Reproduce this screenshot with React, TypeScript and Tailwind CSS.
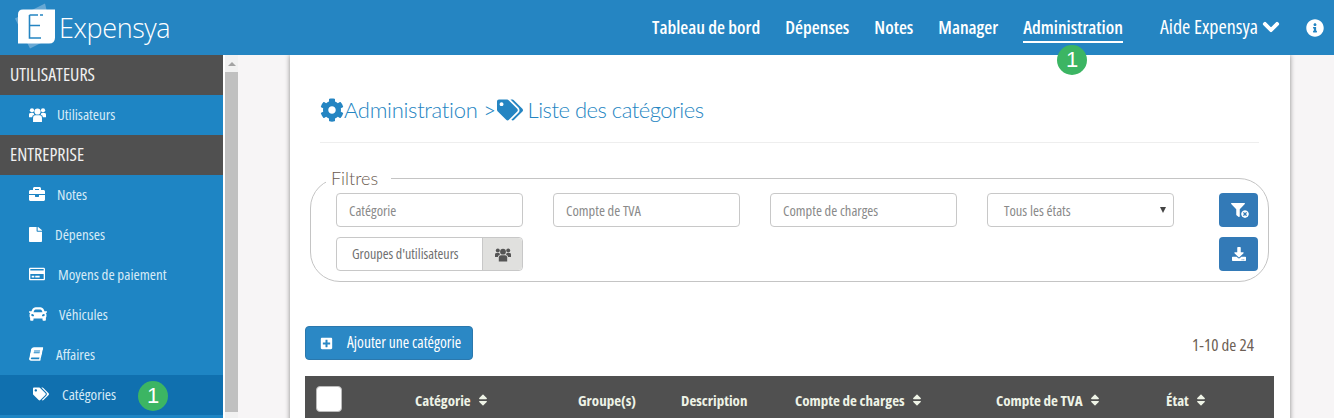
import React from 'react';
import {
  FaBriefcase, FaFile, FaRegCreditCard, FaCar, FaBook, FaTags, FaCog,
  FaChevronDown, FaInfoCircle, FaFilter, FaDownload, FaPlusSquare, FaSort, FaTimesCircle,
} from 'react-icons/fa';

const narrow = "font-['Open_Sans',sans-serif] [font-stretch:75%] whitespace-nowrap";

const navLinks = ['Tableau de bord', 'Dépenses', 'Notes', 'Manager'];

const filterInputs = ['Catégorie', 'Compte de TVA', 'Compte de charges'];

// three people glyph, the package one is too flat compared to the screenshot
function UsersIcon({ className }: { className?: string }) {
  return (
    <svg viewBox="0 0 16 14" fill="currentColor" className={className}>
      <circle cx="8" cy="4.2" r="2.9" />
      <circle cx="2.8" cy="3" r="2" />
      <circle cx="13.2" cy="3" r="2" />
      <path d="M3.8 14 V10 Q3.8 7.8 6 7.8 H10 Q12.2 7.8 12.2 10 V14 Z" />
      <path d="M0 9.6 V7 Q0 5.6 1.5 5.6 H4.4 Q4.5 6.6 5 7.2 Q3 7.6 2.9 9.6 Z" />
      <path d="M16 9.6 V7 Q16 5.6 14.5 5.6 H11.6 Q11.5 6.6 11 7.2 Q13 7.6 13.1 9.6 Z" />
    </svg>
  );
}

function Logo() {
  return (
    <div className="flex items-center">
      <svg width="42" height="42" viewBox="0 0 42 42" className="shrink-0 overflow-visible">
        <polygon points="30,-3.5 0,11.5 15,41.5 38,30" fill="#68a8d4" />
        <path d="M8 2.5 Q3 2.5 3 7.5 V36.5 H34 Q40 36.5 40 30.5 V2.5 Z" fill="#ffffff" />
        <path d="M14.5 8 V31 H26 M14.5 18.5 H25 M14.5 8 H23 M25 8 H28" fill="none" stroke="#2585c2" strokeWidth="1.6" />
      </svg>
      <span className="ml-[2px] font-['Open_Sans',sans-serif] font-light text-[27px] leading-none tracking-[-0.4px] text-white">
        Expensya
      </span>
    </div>
  );
}

function Badge() {
  return (
    <span className="flex h-[30px] w-[30px] items-center justify-center rounded-full bg-[#3cb563] font-['Liberation_Sans',sans-serif] text-[22px] font-normal leading-none text-white [font-stretch:100%]">
      1
    </span>
  );
}

function Header() {
  return (
    <header className="flex h-[55px] items-center bg-[#2585c2] pl-[15px] text-white">
      <Logo />
      <nav className={`ml-auto flex h-full items-center ${narrow} text-[18.3px] font-semibold`}>
        <div className="flex gap-[25px] pb-[2px]">
          {navLinks.map((link) => (
            <a key={link}>{link}</a>
          ))}
        </div>
        <div className="relative ml-[25px] flex h-full items-center pb-[2px]">
          <a>Administration</a>
          <span className="absolute left-0 right-0 top-[41px] h-[2px] bg-white" />
          <span className="absolute left-[34px] top-[45px] z-10"><Badge /></span>
        </div>
        <a className="ml-[37px] flex items-center pb-[2px] text-[20px] font-medium">
          Aide Expensya
          <FaChevronDown className="ml-[4px] h-[18px] w-[18px]" stroke="currentColor" strokeWidth={30} />
        </a>
        <FaInfoCircle className="ml-[26px] mr-[10px] h-[18px] w-[18px]" />
      </nav>
    </header>
  );
}

function SectionTitle({ label }: { label: string }) {
  return (
    <div className={`flex h-[40px] items-center bg-[#505050] pb-[2px] pl-[10px] ${narrow} text-[18px] text-[#f0f0f0]`}>
      {label}
    </div>
  );
}

function Sidebar() {
  return (
    <aside className="flex w-[238px] shrink-0 bg-white">
      <div className={`w-[223px] shrink-0 bg-[#1e85c4] ${narrow} text-[15px] leading-[20px] text-[#d6ebf7]`}>
        <SectionTitle label="UTILISATEURS" />
        <div className="flex h-[40px] items-center pb-[2px] pl-[29px]">
          <UsersIcon className="h-[15px] w-[17px] text-white" />
          <span className="ml-[11px]">Utilisateurs</span>
        </div>
        <SectionTitle label="ENTREPRISE" />
        <div className="flex h-[40px] items-center pb-[2px] pl-[29px]">
          <FaBriefcase className="h-[16px] w-[16px] text-white" />
          <span className="ml-[12px]">Notes</span>
        </div>
        <div className="flex h-[40px] items-center pb-[2px] pl-[29px]">
          <FaFile className="h-[15px] w-[13px] text-white" preserveAspectRatio="none" />
          <span className="ml-[13px]">Dépenses</span>
        </div>
        <div className="flex h-[40px] items-center pb-[2px] pl-[29px]">
          <FaRegCreditCard className="h-[16px] w-[16px] text-white" />
          <span className="ml-[13px]">Moyens de paiement</span>
        </div>
        <div className="flex h-[40px] items-center pb-[2px] pl-[29px]">
          <FaCar className="h-[18px] w-[18px] text-white" />
          <span className="ml-[12px]">Véhicules</span>
        </div>
        <div className="flex h-[40px] items-center pb-[2px] pl-[30px]">
          <FaBook className="h-[14px] w-[12px] -skew-x-12 text-white" />
          <span className="ml-[14px]">Affaires</span>
        </div>
        <div className="flex h-[40px] items-center bg-[#1070af] pb-[2px] pl-[33px]">
          <FaTags className="h-[16px] w-[16px] text-white" />
          <span className="ml-[13px]">Catégories</span>
          <span className="ml-[22px] mt-[4px]"><Badge /></span>
        </div>
        <div className="h-[40px]" />
      </div>
      <div className="ml-[2px] w-[13px] shrink-0 bg-[#f1f1f1]">
        <div className="flex h-[17px] items-center justify-center">
          <span className="h-0 w-0 border-x-[4px] border-b-[4px] border-x-transparent border-b-[#a3a3a3]" />
        </div>
        <div className="h-[340px] bg-[#c0c0c0]" />
      </div>
    </aside>
  );
}

function FilterInput({ label }: { label: string }) {
  return (
    <div className="flex h-[34px] w-[187px] items-center rounded-[4px] border border-[#c8c8c8] pl-[12px] pt-[2px] text-[14.5px] text-[#8a8a8a]">
      {label}
    </div>
  );
}

function Filters() {
  return (
    <fieldset className="mx-[5px] rounded-[30px] border border-[#c4c4c4] pb-[10px] pl-[25px] pr-[10px]">
      <legend className="-ml-[10px] pl-[5px] pr-[13px] font-['Lato',sans-serif] font-light text-[18px] leading-[22px] text-[#6a5a50]">
        Filtres
      </legend>
      <div className={`mt-[4px] flex justify-between ${narrow}`}>
        <div className="flex flex-col gap-[10px]">
          <div className="flex gap-[30px]">
            {filterInputs.map((label) => (
              <FilterInput key={label} label={label} />
            ))}
            <div className="flex h-[34px] w-[187px] items-center justify-between rounded-[4px] border border-[#c8c8c8] pl-[16px] pr-[7px] text-[14.5px] text-[#8a8a8a]">
              <span className="pt-[2px]">Tous les états</span>
              <span className="h-0 w-0 border-x-[3.5px] border-t-[6px] border-x-transparent border-t-[#444444]" />
            </div>
          </div>
          <div className="flex h-[34px] w-[187px] rounded-[4px] border border-[#c8c8c8] text-[14px]">
            <div className="flex flex-1 items-center pb-[2px] pl-[15px] text-[#6f6f6f]">Groupes d'utilisateurs</div>
            <div className="flex w-[40px] items-center justify-center rounded-r-[4px] border-l border-[#c8c8c8] bg-[#e0e0de]">
              <UsersIcon className="h-[15px] w-[16px] text-[#555555]" />
            </div>
          </div>
        </div>
        <div className="flex flex-col gap-[10px]">
          <button className="relative flex h-[34px] w-[39px] items-center justify-center rounded-[4px] bg-[#337ab7] text-white">
            <FaFilter className="h-[14px] w-[14px] -translate-x-[1px]" />
            <FaTimesCircle className="absolute left-[22px] top-[17px] h-[8px] w-[8px] rounded-full bg-[#337ab7]" />
          </button>
          <button className="flex h-[34px] w-[39px] items-center justify-center rounded-[4px] bg-[#337ab7] text-white">
            <FaDownload className="h-[14px] w-[14px]" />
          </button>
        </div>
      </div>
    </fieldset>
  );
}

function SortIcon() {
  return <FaSort className="ml-[7px] h-[14px] w-[10px] shrink-0" />;
}

function TableHead() {
  const cell = 'flex h-[26px] items-center pt-[2px]';
  return (
    <div className={`mt-[16px] grid h-[60px] grid-cols-[110px_163px_103px_114px_201px_170px_108px] items-start bg-[#505050] pt-[10px] ${narrow} text-[15px] font-bold text-[#eef3e6]`}>
      <div className="pl-[11px]">
        <div className="h-[26px] w-[26px] rounded-[4px] border border-[#bbbbbb] bg-white" />
      </div>
      <div className={cell}>Catégorie<SortIcon /></div>
      <div className={cell}>Groupe(s)</div>
      <div className={cell}>Description</div>
      <div className={cell}>Compte de charges<SortIcon /></div>
      <div className={cell}>Compte de TVA<SortIcon /></div>
      <div className={cell}>État<SortIcon /></div>
    </div>
  );
}

function Content() {
  return (
    <main className="flex-1 bg-[#f7f5f6] pl-[52px] pr-[44px]">
      <div className="h-[500px] bg-white pl-[15px] pr-[16px] shadow-[0_0_5px_rgba(0,0,0,0.45)]">
        <div className="mx-[15px] flex h-[88px] items-center border-b border-[#eeeeee] pt-[22px] font-['Lato',sans-serif] font-light text-[22px] tracking-[-0.3px] text-[#2585c2]">
          <FaCog className="h-[24px] w-[24px]" />
          <span>Administration &gt;</span>
          <FaTags className="ml-[1px] mr-[5px] h-[24px] w-[26px]" />
          <span className="tracking-[-0.5px]">Liste des catégories</span>
        </div>
        <div className="mt-[24px]">
          <Filters />
        </div>
        <div className={`mt-[44px] flex items-center justify-between ${narrow}`}>
          <button className="flex h-[34px] w-[168px] items-center rounded-[4px] border border-[#2b78ad] bg-[#2b88c5] pl-[14px] text-[15.5px] text-white">
            <FaPlusSquare className="h-[13px] w-[13px]" />
            <span className="ml-[14px]">Ajouter une catégorie</span>
          </button>
          <span className="mr-[20px] mt-[4px] text-[17px] text-[#6d5f55]">1-10 de 24</span>
        </div>
        <TableHead />
      </div>
    </main>
  );
}

export default function App() {
  return (
    <div className="h-[418px] w-[1334px] overflow-hidden bg-white">
      <Header />
      <div className="flex h-[363px] overflow-hidden">
        <Sidebar />
        <Content />
      </div>
    </div>
  );
}
